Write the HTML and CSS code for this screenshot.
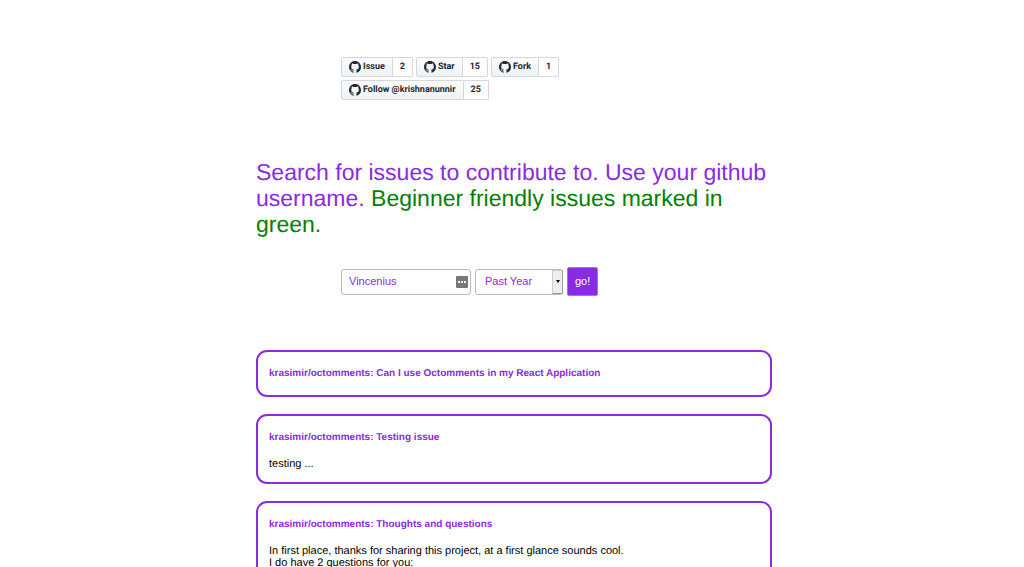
FILE: index.html
```html
<!DOCTYPE html>
<html lang="en">
<head>
<meta charset="utf-8">
<meta name="viewport" content="width=device-width, initial-scale=1">
<title>Search for issues</title>
<link rel="stylesheet" href="styles.css">
</head>
<body>
<svg class="sprite" aria-hidden="true">
  <symbol id="mark" viewBox="0 0 16 16"><path fill-rule="evenodd" d="M8 0C3.58 0 0 3.58 0 8c0 3.54 2.29 6.53 5.47 7.59.4.07.55-.17.55-.38 0-.19-.01-.82-.01-1.49-2.01.37-2.53-.49-2.69-.94-.09-.23-.48-.94-.82-1.13-.28-.15-.68-.52-.01-.53.63-.01 1.08.58 1.23.82.72 1.21 1.87.87 2.33.66.07-.52.28-.87.51-1.07-1.78-.2-3.64-.89-3.64-3.95 0-.87.31-1.59.82-2.15-.08-.2-.36-1.02.08-2.12 0 0 .67-.21 2.2.82.64-.18 1.32-.27 2-.27s1.36.09 2 .27c1.53-1.04 2.2-.82 2.2-.82.44 1.1.16 1.92.08 2.12.51.56.82 1.27.82 2.15 0 3.07-1.87 3.75-3.65 3.95.29.25.54.73.54 1.48 0 1.07-.01 1.93-.01 2.2 0 .21.15.46.55.38A8.01 8.01 0 0 0 16 8c0-4.42-3.58-8-8-8z"/></symbol>
</svg>
<main class="page">
  <nav class="badges" aria-label="GitHub">
    <div class="badge-row">
      <span class="badge"><a class="action" href="#issue"><svg class="mark"><use href="#mark"/></svg>Issue</a><a class="count" href="#issues">2</a></span>
      <span class="badge"><a class="action" href="#star"><svg class="mark"><use href="#mark"/></svg>Star</a><a class="count" href="#stars">15</a></span>
      <span class="badge"><a class="action" href="#fork"><svg class="mark"><use href="#mark"/></svg>Fork</a><a class="count" href="#forks">1</a></span>
    </div>
    <div class="badge-row">
      <span class="badge"><a class="action" href="#follow"><svg class="mark"><use href="#mark"/></svg>Follow @krishnanunnir</a><a class="count" href="#followers">25</a></span>
    </div>
  </nav>
  <h1 class="intro">Search for issues to contribute to. Use your github username. <span class="friendly">Beginner friendly issues marked in green.</span></h1>
  <form class="search">
    <div class="user">
      <input class="field name" type="text" value="Vincenius" aria-label="GitHub username">
      <svg class="autofill" viewBox="0 0 12 12" aria-hidden="true"><rect width="12" height="12" rx="1" fill="#777"/><path d="M2 5h2v2H2zM5 5h2v2H5zM8 5h2v2H8z" fill="#fff"/></svg>
    </div>
    <div class="period">
      <select class="field range" aria-label="Period"><option>Past Year</option></select>
      <span class="arrow" aria-hidden="true"></span>
    </div>
    <button class="go" type="button">go!</button>
  </form>
  <section class="issues">
    <article class="issue">
      <h2 class="title"><a href="#issue-1">krasimir/octomments: Can I use Octomments in my React Application</a></h2>
    </article>
    <article class="issue">
      <h2 class="title"><a href="#issue-2">krasimir/octomments: Testing issue</a></h2>
      <p class="text">testing ...</p>
    </article>
    <article class="issue">
      <h2 class="title"><a href="#issue-3">krasimir/octomments: Thoughts and questions</a></h2>
      <p class="text">In first place, thanks for sharing this project, at a first glance sounds cool.<br>I do have 2 questions for you:</p>
    </article>
  </section>
</main>
</body>
</html>
```
FILE: styles.css
```css
* { box-sizing: border-box; }
body {
  margin: 0;
  background: #fff;
  color: #000;
  font: 11px/12px "Liberation Sans", Arial, sans-serif;
  text-rendering: geometricPrecision;
}
a { color: inherit; text-decoration: none; }
.sprite { display: none; }
.page {
  width: 50%;
  margin: 0 auto;
  padding-top: 57px;
}
.badges {
  display: flex;
  flex-direction: column;
  gap: 3px;
  margin-left: 85px;
}
.badge-row { display: flex; gap: 3px; }
.badge {
  display: flex;
  height: 20px;
  font: bold 9px/18px Roboto, sans-serif;
  color: #24292e;
}
.action, .count {
  display: flex;
  align-items: center;
  border: 1px solid #d5d8da;
  white-space: nowrap;
}
.action {
  gap: 2px;
  padding: 0 7px;
  background: linear-gradient(#fafbfc, #eff3f6);
  border-radius: 2px 0 0 2px;
}
.count {
  padding: 0 7px;
  border-left: 0;
  border-radius: 0 2px 2px 0;
}
.mark { width: 12px; height: 12px; fill: #24292e; }
.intro {
  margin: 59px 0 0;
  color: #8a2be2;
  font-size: 23px;
  line-height: 26px;
  font-weight: normal;
}
.friendly { color: #008000; }
.search {
  display: flex;
  align-items: center;
  gap: 4px;
  margin: 30px 0 0 85px;
}
.user, .period { position: relative; }
.field {
  display: block;
  height: 26px;
  margin: 0;
  border: 1px solid #bbb;
  border-radius: 3px;
  background: #fff;
  color: #8a2be2;
  font: 11px/14px "Liberation Sans", Arial, sans-serif;
}
.name { width: 130px; padding: 0 24px 2px 7px; }
.autofill {
  position: absolute;
  top: 7px;
  right: 3px;
  width: 12px;
  height: 12px;
}
.range {
  width: 88px;
  padding: 0 12px 2px 9px;
  appearance: none;
}
.arrow {
  position: absolute;
  top: 1px;
  right: 0;
  bottom: 1px;
  display: grid;
  place-items: center;
  width: 11px;
  border: 1px solid #999;
  border-left-color: #ccc;
  border-top-color: #ccc;
  background: #eee;
  pointer-events: none;
}
.arrow::before {
  content: "";
  border: 2px solid transparent;
  border-top: 3px solid #000;
  border-bottom: 0;
}
.go {
  height: 29px;
  padding: 0 7px 2px;
  border: 1px solid #9c7cc0;
  border-radius: 2px;
  background: #8a2be2;
  color: #fff;
  font: 11px/14px "Liberation Sans", Arial, sans-serif;
}
.issues {
  display: flex;
  flex-direction: column;
  gap: 17px;
  margin: 54px -4px 0 0;
}
.issue {
  padding: 16px 11px 12px;
  border: 2px solid #8a2be2;
  border-radius: 11px;
}
.title {
  margin: 0;
  padding-bottom: 3px;
  color: #8a2be2;
  font-size: 10px;
  line-height: 12px;
}
.text { margin: 11px 0 0; line-height: 12px; }
```
